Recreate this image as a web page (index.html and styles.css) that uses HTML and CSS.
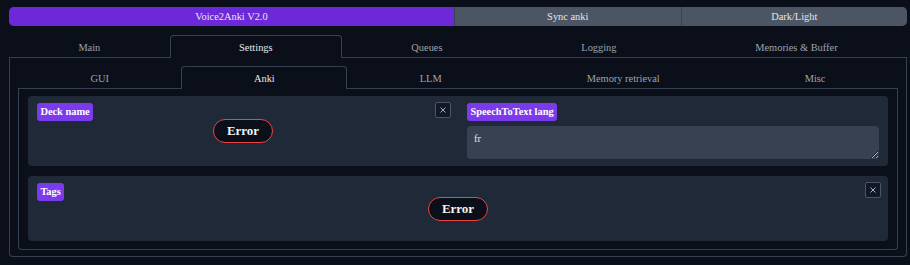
FILE: index.html
```html
<!DOCTYPE html>
<html lang="en">
<head>
<meta charset="utf-8">
<title>Voice2Anki</title>
<link rel="stylesheet" href="styles.css">
</head>
<body>
<div class="app">
  <div class="topbar">
    <button class="tb primary">Voice2Anki V2.0</button>
    <button class="tb secondary">Sync anki</button>
    <button class="tb secondary">Dark/Light</button>
  </div>

  <div class="tabs outer-tabs">
    <div class="tabnav">
      <button class="tab">Main</button>
      <button class="tab sel">Settings</button>
      <button class="tab">Queues</button>
      <button class="tab">Logging</button>
      <button class="tab">Memories &amp; Buffer</button>
    </div>
    <div class="panel outer-panel">
      <div class="tabs inner-tabs">
        <div class="tabnav sub">
          <button class="tab">GUI</button>
          <button class="tab sel">Anki</button>
          <button class="tab">LLM</button>
          <button class="tab">Memory retrieval</button>
          <button class="tab">Misc</button>
        </div>
        <div class="panel inner-panel">
          <div class="card row-card">
            <div class="col">
              <span class="badge">Deck name</span>
              <div class="status"><span class="error">Error</span></div>
              <button class="close" aria-label="close">
                <svg width="14" height="14" viewBox="0 0 14 14"><path d="M4.5 4.5 L9.5 9.5 M9.5 4.5 L4.5 9.5" stroke="#d1d5db" stroke-width="0.8" fill="none"/></svg>
              </button>
            </div>
            <div class="col">
              <span class="badge">SpeechToText lang</span>
              <textarea class="ta">fr</textarea>
            </div>
          </div>
          <div class="card tags-card">
            <span class="badge">Tags</span>
            <div class="status"><span class="error">Error</span></div>
            <button class="close" aria-label="close">
              <svg width="14" height="14" viewBox="0 0 14 14"><path d="M4.5 4.5 L9.5 9.5 M9.5 4.5 L4.5 9.5" stroke="#d1d5db" stroke-width="0.8" fill="none"/></svg>
            </button>
          </div>
        </div>
      </div>
    </div>
  </div>
</div>
</body>
</html>
```

FILE: styles.css
```css
* { box-sizing: border-box; }

html, body {
  margin: 0;
  background: #0b0f19;
}

body {
  font-family: "Liberation Serif", "Times New Roman", serif;
  font-size: 10.4px;
  color: #e5e7eb;
}

.app {
  margin-left: 9px;
  width: 898px;
  padding-top: 7px;
}

button {
  font: inherit;
  cursor: pointer;
}

/* top bar */
.topbar {
  display: flex;
  gap: 1px;
  height: 19px;
  border-radius: 5px;
  overflow: hidden;
  background: #374151;
}

.tb {
  border: none;
  margin: 0;
  padding: 0;
  color: #e5e7eb;
  line-height: 19px;
}

.tb.primary {
  flex: 0 0 445px;
  background: #6d28d9;
}

.tb.secondary {
  flex: 1 1 0;
  background: #4b5563;
}

/* tabs */
.outer-tabs {
  margin-top: 9px;
}

.tabnav {
  display: flex;
  height: 23px;
  border-bottom: 1px solid #374151;
}

.tab {
  flex: 1 1 auto;
  height: 23px;
  margin: 0 0 -1px 0;
  padding: 0 12px;
  border: 1px solid transparent;
  border-bottom: none;
  border-radius: 4px 4px 0 0;
  background: transparent;
  color: #9ca3af;
  line-height: 21px;
  white-space: nowrap;
}

.tab.sel {
  border-color: #374151;
  background: #0b0f19;
  color: #e5e7eb;
}

.panel {
  border: 1px solid #374151;
  border-top: none;
  border-radius: 0 0 4px 4px;
}

.outer-panel {
  padding: 8px 8px 6px 8px;
}

.inner-panel {
  padding: 7px 9px 8px 9px;
  display: flex;
  flex-direction: column;
  gap: 10px;
}

/* cards */
.card {
  background: #1f2937;
  border-radius: 4px;
  position: relative;
}

.row-card {
  display: flex;
  height: 70px;
}

.col {
  flex: 1 1 0;
  position: relative;
  padding: 7px 9px;
  display: flex;
  flex-direction: column;
  align-items: flex-start;
}

.tags-card {
  height: 65px;
  padding: 7px 9px;
}

.badge {
  display: inline-block;
  height: 18px;
  line-height: 18px;
  padding: 0 3.4px;
  background: #7c3aed;
  color: #ffffff;
  font-weight: bold;
  border-radius: 3px;
  position: relative;
  z-index: 1;
}

.ta {
  display: block;
  width: 100%;
  height: 33px;
  margin-top: 5px;
  padding: 7px 7px;
  border: none;
  border-radius: 4px;
  background: #374151;
  color: #e5e7eb;
  font: inherit;
  resize: vertical;
  outline: none;
}

/* overlays */
.status {
  position: absolute;
  inset: 0;
  display: flex;
  align-items: center;
  justify-content: center;
  pointer-events: none;
}

.error {
  height: 24px;
  line-height: 22px;
  padding: 0 13px;
  border: 1px solid #ef4444;
  border-radius: 12px;
  background: #0b0f19;
  color: #f3f4f6;
  font-weight: bold;
  font-size: 13px;
}

.close {
  position: absolute;
  top: 6px;
  right: 7px;
  width: 16px;
  height: 16px;
  padding: 0;
  border: 1px solid #4b5563;
  border-radius: 2px;
  background: #111827;
  display: flex;
  align-items: center;
  justify-content: center;
}

.close svg {
  display: block;
}
```
